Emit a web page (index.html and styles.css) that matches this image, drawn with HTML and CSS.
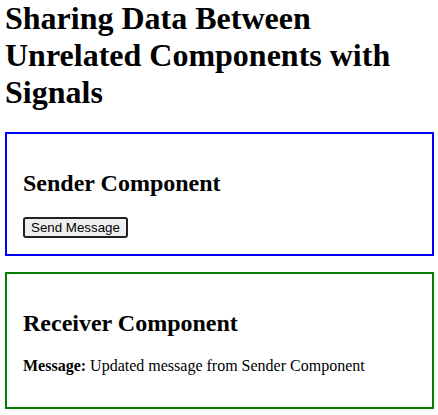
FILE: index.html
```html
<!DOCTYPE html>
<html lang="en">
<head>
    <meta charset="UTF-8">
    <meta name="viewport" content="width=device-width, initial-scale=1.0">
    <title>Signals Demo</title>
    <link rel="stylesheet" href="styles.css">
    <script>
        function sendMessage() {
            document.getElementById('message-text').innerText = 'Updated message from Sender Component';
        }
    </script>
</head>
<body>
    <h1>Sharing Data Between Unrelated Components with Signals</h1>

    <div class="card sender">
        <h2>Sender Component</h2>
        <button onclick="sendMessage()">Send Message</button>
    </div>

    <div class="card receiver">
        <h2>Receiver Component</h2>
        <p><strong>Message:</strong> <span id="message-text">Updated message from Sender Component</span></p>
    </div>
</body>
</html>
```

FILE: styles.css
```css
body {
    font-family: "Liberation Serif", "Times New Roman", serif;
    margin: 0;
    padding: 0 4px 0 5px;
}
h1 {
    margin-top: 0;
}
.card {
    padding: 16px;
    margin-bottom: 16px;
}
.sender {
    border: 2px solid blue;
}
.receiver {
    border: 2px solid green;
}
button {
    font-family: "Liberation Sans", Arial, sans-serif;
    font-size: 13.33px;
    color: #000;
    background-color: #efefef;
    border: 2px solid #222;
    border-radius: 3px;
    padding: 1px 6px;
}
```
